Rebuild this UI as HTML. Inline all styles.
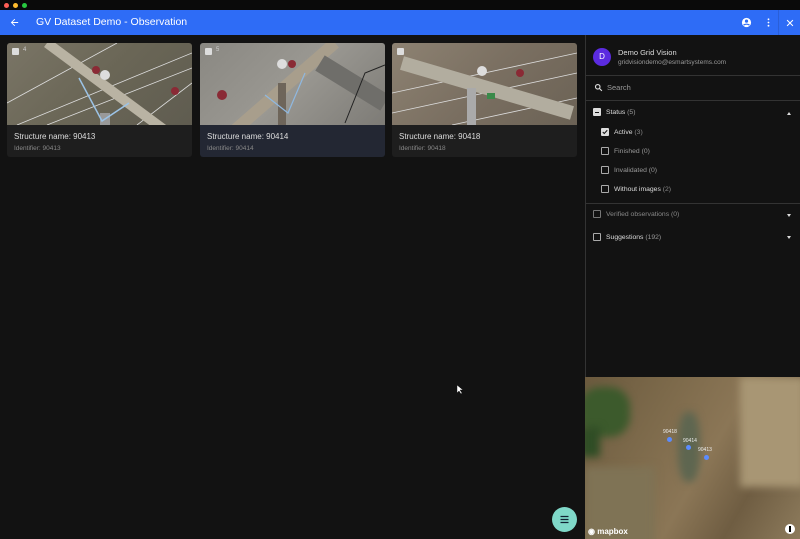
<!DOCTYPE html>
<html><head><meta charset="utf-8"><style>
*{box-sizing:border-box;margin:0;padding:0}
body{width:800px;height:539px;overflow:hidden;background:#121212;font-family:"Liberation Sans",sans-serif;position:relative;color:#e8e8e8}
.tb{position:absolute;left:0;top:0;width:800px;height:10px;background:#0a0a0a}
.dot{position:absolute;top:3px;width:5px;height:5px;border-radius:50%}
.hd{position:absolute;top:10px;left:0;width:800px;height:25px;background:#2e6cf6}
.hd .t{position:absolute;left:36px;top:6px;font-size:10.5px;color:#fff}
.card{position:absolute;top:43px;width:185px;height:114px;background:#1e1e1e;border-radius:3px;overflow:hidden}
.img{height:82px;position:relative;overflow:hidden}
.cap{padding:7px 7px;font-size:8px}
.cap .s{color:#ddd}
.cap .i{color:#888;font-size:6.5px;margin-top:4px}
.badge{position:absolute;left:5px;top:5px;width:7px;height:7px;background:#ddd;border-radius:1px}
.bn{position:absolute;left:16px;top:4px;font-size:6px;color:#ccc}
.side{position:absolute;left:585px;top:35px;width:215px;height:504px;background:#121212;border-left:1px solid #333}
.sep{position:absolute;left:0;width:215px;height:1px;background:#333}
.lbl{position:absolute;font-size:6.8px;color:#ccc}
.cb{position:absolute;width:8px;height:8px;border:1px solid #aaa;border-radius:1px}
.arr{position:absolute;right:9px;width:0;height:0;border-left:2.5px solid transparent;border-right:2.5px solid transparent}
.map{position:absolute;left:585px;top:377px;width:215px;height:162px;background:linear-gradient(120deg,#6b5a3e 0%,#7d6a4b 30%,#8b7656 55%,#6f5d42 75%,#8d7b5c 100%);overflow:hidden}
.map .b{position:absolute;filter:blur(4px)}
.fab{position:absolute;left:552px;top:507px;width:25px;height:25px;border-radius:50%;background:#7fd8c8}
</style></head><body>
<div class="tb"><div class="dot" style="left:4px;background:#fe5f57"></div><div class="dot" style="left:13px;background:#febc2e"></div><div class="dot" style="left:22px;background:#28c840"></div></div>
<div class="hd">
<svg style="position:absolute;left:9px;top:7px" width="11" height="11" viewBox="0 0 24 24"><path d="M20 11H7.8l5.6-5.6L12 4l-8 8 8 8 1.4-1.4L7.8 13H20z" fill="#fff"/></svg>
<div class="t">GV Dataset Demo - Observation</div>
<svg style="position:absolute;left:741px;top:7px" width="11" height="11" viewBox="0 0 24 24"><circle cx="12" cy="12" r="10" fill="#fff"/><circle cx="12" cy="9" r="3.5" fill="#2e6cf6"/><path d="M5.5 18c2-3 11-3 13 0" stroke="#2e6cf6" stroke-width="2.5" fill="none"/></svg>
<svg style="position:absolute;left:763px;top:7px" width="11" height="11" viewBox="0 0 24 24"><circle cx="12" cy="5" r="2" fill="#fff"/><circle cx="12" cy="12" r="2" fill="#fff"/><circle cx="12" cy="19" r="2" fill="#fff"/></svg>
<div style="position:absolute;left:778px;top:0;width:1px;height:25px;background:#2a5fd8"></div>
<svg style="position:absolute;left:785px;top:8px" width="10" height="10" viewBox="0 0 24 24"><path d="M5 5l14 14M19 5L5 19" stroke="#fff" stroke-width="2.5"/></svg>
</div>

<div class="card" style="left:7px"><div class="img" style="background:linear-gradient(135deg,#7a7566,#6a6656 50%,#5f5c50)">
<svg width="185" height="82" style="position:absolute;left:0;top:0"><path d="M0 60L110 0M10 82L185 10M40 82L185 25M130 82L185 40" stroke="#ddd" stroke-width=".8"/><path d="M40 0L175 100" stroke="#b9b3a3" stroke-width="10"/><rect x="93" y="70" width="10" height="20" fill="#999"/><path d="M72 35L95 78L122 60" stroke="#9cc3e6" stroke-width="1.5" fill="none"/><circle cx="89" cy="27" r="4" fill="#8a2a35"/><circle cx="98" cy="32" r="5" fill="#ddd"/><circle cx="168" cy="48" r="4" fill="#8a2a35"/></svg>
<div class="badge"></div><div class="bn">4</div></div>
<div class="cap"><div class="s">Structure name: 90413</div><div class="i">Identifier: 90413</div></div></div>

<div class="card" style="left:200px;background:#232733"><div class="img" style="background:linear-gradient(135deg,#8a8882,#9a9892 50%,#7d7b76)">
<svg width="185" height="82" style="position:absolute;left:0;top:0"><path d="M20 100L135 0" stroke="#a89e8c" stroke-width="12"/><path d="M120 20L185 60" stroke="#6f6e6a" stroke-width="18"/><rect x="78" y="40" width="8" height="42" fill="#6e655a"/><path d="M65 52L88 70L105 30" stroke="#8fb8e0" stroke-width="1.2" fill="none"/><circle cx="82" cy="21" r="5" fill="#ddd"/><circle cx="92" cy="21" r="4" fill="#8a2a35"/><circle cx="22" cy="52" r="5" fill="#8a2a35"/><path d="M145 80L165 30L185 22" stroke="#222" stroke-width="1" fill="none"/></svg>
<div class="badge"></div><div class="bn">5</div></div>
<div class="cap"><div class="s">Structure name: 90414</div><div class="i">Identifier: 90414</div></div></div>

<div class="card" style="left:392px"><div class="img" style="background:linear-gradient(135deg,#8d8272,#7a6f61 50%,#6b6255)">
<svg width="185" height="82" style="position:absolute;left:0;top:0"><path d="M0 50L185 10M0 70L185 30M60 82L185 55" stroke="#ddd" stroke-width=".8"/><path d="M10 20L180 70" stroke="#b2ad9f" stroke-width="14"/><rect x="75" y="45" width="9" height="37" fill="#aaa"/><circle cx="90" cy="28" r="5" fill="#ddd"/><circle cx="128" cy="30" r="4" fill="#8a2a35"/><rect x="95" y="50" width="8" height="6" fill="#3a8a4a"/></svg>
<div class="badge"></div><div class="bn"></div></div>
<div class="cap"><div class="s">Structure name: 90418</div><div class="i">Identifier: 90418</div></div></div>

<div class="side">
<div style="position:absolute;left:7px;top:13px;width:18px;height:18px;border-radius:50%;background:#5b2be0;color:#fff;font-size:8px;text-align:center;line-height:18px">D</div>
<div style="position:absolute;left:32px;top:13px;font-size:7.5px;color:#ddd">Demo Grid Vision</div>
<div style="position:absolute;left:32px;top:24px;font-size:6.5px;color:#999">gridvisiondemo@esmartsystems.com</div>
<div class="sep" style="top:40px"></div>
<svg style="position:absolute;left:8px;top:48px" width="9" height="9" viewBox="0 0 24 24"><circle cx="10" cy="10" r="6" stroke="#ddd" stroke-width="3" fill="none"/><path d="M14 14l7 7" stroke="#ddd" stroke-width="3"/></svg>
<div style="position:absolute;left:21px;top:48px;font-size:7.5px;color:#999">Search</div>
<div class="sep" style="top:65px"></div>
<div class="cb" style="left:7px;top:73px;background:#ddd;border-color:#ddd"><div style="margin:2.5px 1px;height:1.5px;background:#111"></div></div>
<div class="lbl" style="left:20px;top:74px"><span style="color:#ddd">Status</span> <span style="color:#999">(5)</span></div>
<div class="arr" style="top:77px;border-bottom:3px solid #ddd"></div>
<div class="cb" style="left:15px;top:93px;background:#ddd;border-color:#ddd"><svg width="6" height="6" viewBox="0 0 24 24" style="position:absolute;left:0;top:0"><path d="M3 12l6 6L21 5" stroke="#111" stroke-width="4" fill="none"/></svg></div>
<div class="lbl" style="left:28px;top:94px"><span style="color:#ddd">Active</span> <span style="color:#888">(3)</span></div>
<div class="cb" style="left:15px;top:112px"></div>
<div class="lbl" style="left:28px;top:113px;color:#999">Finished (0)</div>
<div class="cb" style="left:15px;top:131px"></div>
<div class="lbl" style="left:28px;top:132px;color:#999">Invalidated (0)</div>
<div class="cb" style="left:15px;top:150px"></div>
<div class="lbl" style="left:28px;top:151px"><span style="color:#ddd">Without images</span> <span style="color:#888">(2)</span></div>
<div class="sep" style="top:168px"></div>
<div class="cb" style="left:7px;top:175px;border-color:#777"></div>
<div class="lbl" style="left:20px;top:176px;color:#888">Verified observations (0)</div>
<div class="arr" style="top:179px;border-top:3px solid #ddd"></div>
<div class="cb" style="left:7px;top:198px"></div>
<div class="lbl" style="left:20px;top:199px"><span style="color:#ddd">Suggestions</span> <span style="color:#999">(192)</span></div>
<div class="arr" style="top:201px;border-top:3px solid #ddd"></div>
</div>

<div class="map">
<div class="b" style="left:-5px;top:10px;width:50px;height:50px;background:#3c5a2c;border-radius:40%"></div>
<div class="b" style="left:-5px;top:50px;width:20px;height:30px;background:#2f4d25"></div>
<div class="b" style="left:155px;top:0;width:65px;height:110px;background:#a89674"></div>
<div class="b" style="left:0;top:90px;width:70px;height:82px;background:#7f7355"></div>
<div class="b" style="left:93px;top:35px;width:22px;height:70px;background:#5e6650;border-radius:40%"></div>
<div style="position:absolute;left:82px;top:60px;width:5px;height:5px;border-radius:50%;background:#5b8cff"></div>
<div style="position:absolute;left:101px;top:68px;width:5px;height:5px;border-radius:50%;background:#5b8cff"></div>
<div style="position:absolute;left:119px;top:78px;width:5px;height:5px;border-radius:50%;background:#5b8cff"></div>
<div style="position:absolute;left:78px;top:52px;font-size:5px;color:#eee">90418</div>
<div style="position:absolute;left:98px;top:61px;font-size:5px;color:#eee">90414</div>
<div style="position:absolute;left:113px;top:70px;font-size:5px;color:#eee">90413</div>
<div style="position:absolute;left:3px;top:150px;font-size:8px;color:#fff;font-weight:bold">◉ mapbox</div>
<div style="position:absolute;left:200px;top:147px;width:10px;height:10px;border-radius:50%;background:#fff"><div style="margin:2px 4px;width:2px;height:6px;background:#000"></div></div>
</div>

<div class="fab"><svg width="25" height="25" viewBox="0 0 25 25"><path d="M8.5 9.5h8M8.5 12.5h8M8.5 15.5h8" stroke="#123" stroke-width="1.2"/></svg></div>
<svg style="position:absolute;left:457px;top:385px" width="6" height="9" viewBox="0 0 6 9"><path d="M0 0v8l2-2 2 3 1-1-2-3h3z" fill="#fff" stroke="#000" stroke-width=".4"/></svg>
</body></html>
